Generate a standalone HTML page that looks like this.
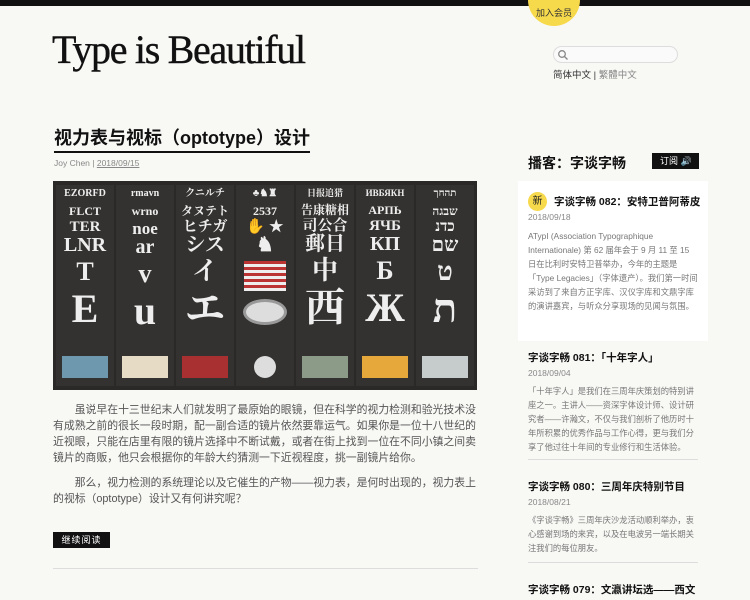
<!DOCTYPE html>
<html><head><meta charset="utf-8"><style>
*{margin:0;padding:0;box-sizing:border-box}
body{width:750px;height:600px;overflow:hidden;background:#f8f8f5;font-family:"Liberation Sans","Noto Sans CJK SC",sans-serif;position:relative;color:#222}
.top{position:absolute;left:0;top:0;width:750px;height:6px;background:#111}
.join{position:absolute;left:528px;top:-26px;width:52px;height:52px;border-radius:50%;background:#f7d94c;font-size:9px;text-align:center;line-height:1;padding-top:35px;color:#333}
.logo{position:absolute;left:52px;top:26px;font-family:"Liberation Serif",serif;font-size:40px;letter-spacing:-1.3px;color:#111;-webkit-text-stroke:0.4px #111}
.search{position:absolute;left:553px;top:46px;width:125px;height:17px;border:1.5px solid #ddd;border-radius:9px;background:#fafafa}
.lang{position:absolute;left:553px;top:67px;font-size:9.5px;color:#333}
.lang span{color:#888}
h1{position:absolute;left:54px;top:126px;font-size:18px;font-weight:bold;color:#111;border-bottom:2px solid #111;padding-bottom:1px;line-height:24px}
.meta{position:absolute;left:54px;top:158px;font-size:8.5px;color:#888}
.meta u{color:#888}
.img{position:absolute;left:53px;top:181px;width:424px;height:209px;background:#2a2928;display:flex;padding:4px 3px;gap:2px}
.col{flex:1;background:#343230;position:relative;color:#eee;text-align:center;font-family:"Liberation Serif","Noto Serif CJK SC",serif;font-weight:bold;overflow:hidden}
.col div{line-height:1}
.sw{position:absolute;left:6px;right:6px;bottom:8px;height:22px}
p.t{position:absolute;left:53px;width:426px;font-size:10.85px;line-height:16px;color:#555;text-indent:2em}
.btn{position:absolute;left:53px;top:532px;width:57px;height:16px;background:#111;color:#fff;font-size:9px;text-align:center;line-height:16px;letter-spacing:1px}
.hr{position:absolute;left:53px;top:568px;width:425px;height:1px;background:#ddd}
.pod{position:absolute;left:528px;top:153px;font-size:14px;font-weight:bold;color:#111}
.sub{position:absolute;left:652px;top:153px;width:47px;height:16px;background:#111;color:#fff;font-size:9px;line-height:16px;padding-left:8px}
.card{position:absolute;left:518px;top:181px;width:190px;height:160px;background:#fff}
.new{position:absolute;left:10px;top:11px;width:19px;height:19px;border-radius:50%;background:#f7d94c;font-size:10px;text-align:center;line-height:19px}
.et{font-size:10.5px;font-weight:bold;color:#111;position:absolute}
.ed{font-size:8.5px;color:#888;position:absolute}
.ex{font-size:8.3px;color:#777;line-height:14px;position:absolute;width:170px}
.sl{position:absolute;left:528px;width:170px;height:1px;background:#ddd}
</style></head><body>
<div class="top"></div>
<div class="join">加入会员</div>
<div class="logo">Type is Beautiful</div>
<div class="search"><svg width="12" height="12" style="position:absolute;left:3px;top:2px"><circle cx="5" cy="5" r="3.3" stroke="#888" stroke-width="1.3" fill="none"/><line x1="7.5" y1="7.5" x2="10.5" y2="10.5" stroke="#888" stroke-width="1.3"/></svg></div>
<div class="lang">简体中文 | <span>繁體中文</span></div>
<h1>视力表与视标（optotype）设计</h1>
<div class="meta">Joy Chen | <u>2018/09/15</u></div>
<div class="img">
<div class="col"><div style="font-size:10px;margin-top:4px">EZORFD</div><div style="font-size:12px;margin-top:6px">FLCT</div><div style="font-size:15px;margin-top:3px">TER</div><div style="font-size:20px">LNR</div><div style="font-size:26px;margin-top:4px">T</div><div style="font-size:40px;margin-top:4px">E</div><div class="sw" style="background:#6d98ad"></div></div>
<div class="col"><div style="font-size:10px;margin-top:4px">rmavn</div><div style="font-size:12px;margin-top:6px">wrno</div><div style="font-size:17px;margin-top:3px">noe</div><div style="font-size:20px">ar</div><div style="font-size:26px;margin-top:4px">v</div><div style="font-size:40px;margin-top:4px">u</div><div class="sw" style="background:#e6dcc6"></div></div>
<div class="col"><div style="font-size:10px;margin-top:4px">クニルチ</div><div style="font-size:12px;margin-top:6px">タヌテト</div><div style="font-size:15px;margin-top:3px">ヒチガ</div><div style="font-size:20px">シス</div><div style="font-size:26px;margin-top:4px">イ</div><div style="font-size:40px;margin-top:4px">エ</div><div class="sw" style="background:#a83030"></div></div>
<div class="col"><div style="font-size:10px;margin-top:4px">♣♞♜</div><div style="font-size:12px;margin-top:6px">2537</div><div style="font-size:15px;margin-top:3px">✋ ★</div><div style="font-size:20px">♞</div><div style="height:30px;margin:6px 8px 0;background:repeating-linear-gradient(#b33 0 3px,#eee 3px 6px)"></div><div style="margin:8px auto 0;width:44px;height:26px;border-radius:50%;background:#ddd;border:3px solid #999"></div><div class="sw" style="left:18px;right:18px;border-radius:50%;background:#ddd"></div></div>
<div class="col"><div style="font-size:9px;margin-top:4px">日报追猎</div><div style="font-size:12px;margin-top:6px">告康糖相</div><div style="font-size:15px;margin-top:3px">司公合</div><div style="font-size:20px">郵日</div><div style="font-size:26px;margin-top:4px">中</div><div style="font-size:40px;margin-top:4px">西</div><div class="sw" style="background:#8b9b88"></div></div>
<div class="col"><div style="font-size:9px;margin-top:4px">ИВБЯКН</div><div style="font-size:12px;margin-top:6px">АРПЬ</div><div style="font-size:15px;margin-top:3px">ЯЧБ</div><div style="font-size:20px">КП</div><div style="font-size:26px;margin-top:4px">Б</div><div style="font-size:40px;margin-top:4px">Ж</div><div class="sw" style="background:#e6a83a"></div></div>
<div class="col"><div style="font-size:10px;margin-top:4px">תהחך</div><div style="font-size:12px;margin-top:6px">שבגה</div><div style="font-size:15px;margin-top:3px">כדנ</div><div style="font-size:20px">שם</div><div style="font-size:26px;margin-top:4px">ט</div><div style="font-size:40px;margin-top:4px">ת</div><div class="sw" style="background:#c6cbcb"></div></div>
</div>
<p class="t" style="top:402px">虽说早在十三世纪末人们就发明了最原始的眼镜，但在科学的视力检测和验光技术没有成熟之前的很长一段时期，配一副合适的镜片依然要靠运气。如果你是一位十八世纪的近视眼，只能在店里有限的镜片选择中不断试戴，或者在街上找到一位在不同小镇之间卖镜片的商贩，他只会根据你的年龄大约猜测一下近视程度，挑一副镜片给你。</p>
<p class="t" style="top:475px">那么，视力检测的系统理论以及它催生的产物——视力表，是何时出现的，视力表上的视标（optotype）设计又有何讲究呢？</p>
<div class="btn">继续阅读</div>
<div class="hr"></div>
<div class="pod">播客：字谈字畅</div>
<div class="sub">订阅 🔊</div>
<div class="card">
<div class="new">新</div>
<div class="et" style="left:36px;top:13px">字谈字畅 082：安特卫普阿蒂皮</div>
<div class="ed" style="left:10px;top:31px">2018/09/18</div>
<div class="ex" style="left:10px;top:48px">ATypI (Association Typographique Internationale) 第 62 届年会于 9 月 11 至 15 日在比利时安特卫普举办，今年的主题是「Type Legacies」（字体遗产）。我们第一时间采访到了来自方正字库、汉仪字库和文鼎字库的演讲嘉宾，与听众分享现场的见闻与氛围。</div>
</div>
<div class="et" style="left:528px;top:350px">字谈字畅 081：「十年字人」</div>
<div class="ed" style="left:528px;top:368px">2018/09/04</div>
<div class="ex" style="left:528px;top:384px">「十年字人」是我们在三周年庆策划的特别讲座之一。主讲人——资深字体设计师、设计研究者——许瀚文，不仅与我们剖析了他历时十年所积累的优秀作品与工作心得，更与我们分享了他过往十年间的专业修行和生活体验。</div>
<div class="sl" style="top:459px"></div>
<div class="et" style="left:528px;top:479px">字谈字畅 080：三周年庆特别节目</div>
<div class="ed" style="left:528px;top:497px">2018/08/21</div>
<div class="ex" style="left:528px;top:513px">《字谈字畅》三周年庆沙龙活动顺利举办，衷心感谢到场的来宾，以及在电波另一端长期关注我们的每位朋友。</div>
<div class="sl" style="top:562px"></div>
<div class="et" style="left:528px;top:582px">字谈字畅 079：文瀛讲坛选——西文</div>
</body></html>
